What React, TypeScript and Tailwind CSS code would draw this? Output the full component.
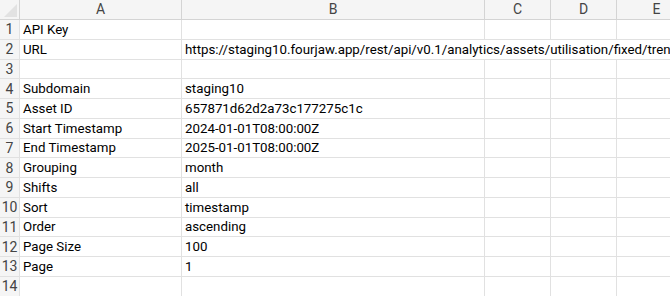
const cols = ["A", "B", "C", "D", "E"];

const rows: [string, string][] = [
  ["API Key", ""],
  ["URL", "https://staging10.fourjaw.app/rest/api/v0.1/analytics/assets/utilisation/fixed/trend"],
  ["", ""],
  ["Subdomain", "staging10"],
  ["Asset ID", "657871d62d2a73c177275c1c"],
  ["Start Timestamp", "2024-01-01T08:00:00Z"],
  ["End Timestamp", "2025-01-01T08:00:00Z"],
  ["Grouping", "month"],
  ["Shifts", "all"],
  ["Sort", "timestamp"],
  ["Order", "ascending"],
  ["Page Size", "100"],
  ["Page", "1"],
  ["", ""],
];

const cell = "h-[19.75px] border-b border-r border-[#e1e1e1] pl-[3px] pt-[1px] flex items-center whitespace-nowrap overflow-hidden";

export default function App() {
  return (
    <div
      className="w-[670px] h-[296px] overflow-hidden bg-white text-[13.3px] text-[#000]"
      style={{ fontFamily: "Roboto, 'Noto Sans', sans-serif" }}
    >
      <div className="grid grid-cols-[20px_162px_303px_66px_66px_80px]">
        {/* Corner + column letters */}
        <div className="h-[20px] bg-[#f5f5f5] border-r border-b border-[#d4d4d4] relative">
          <div className="absolute right-[2px] bottom-[2px] w-0 h-0 border-l-[13px] border-l-transparent border-b-[13px] border-b-[#e2e2e2]" />
        </div>
        {cols.map((c) => (
          <div
            key={c}
            className="h-[20px] bg-[#f5f5f5] border-r border-b border-[#d4d4d4] flex items-center justify-center text-[14px] text-[#444]"
          >
            {c}
          </div>
        ))}

        {rows.map(([label, value], i) => (
          <div key={i} className="contents">
            <div className="h-[19.75px] bg-[#f5f5f5] border-r border-b border-[#e1e1e1] pt-[1px] flex items-center justify-center text-[14px] text-[#444]">
              {i + 1}
            </div>
            <div className={cell}>{label}</div>
            {i === 1 ? (
              <div className={`${cell} col-span-4`}>{value}</div>
            ) : (
              <>
                <div className={cell}>{value}</div>
                <div className={cell} />
                <div className={cell} />
                <div className={cell} />
              </>
            )}
          </div>
        ))}
      </div>
    </div>
  );
}
